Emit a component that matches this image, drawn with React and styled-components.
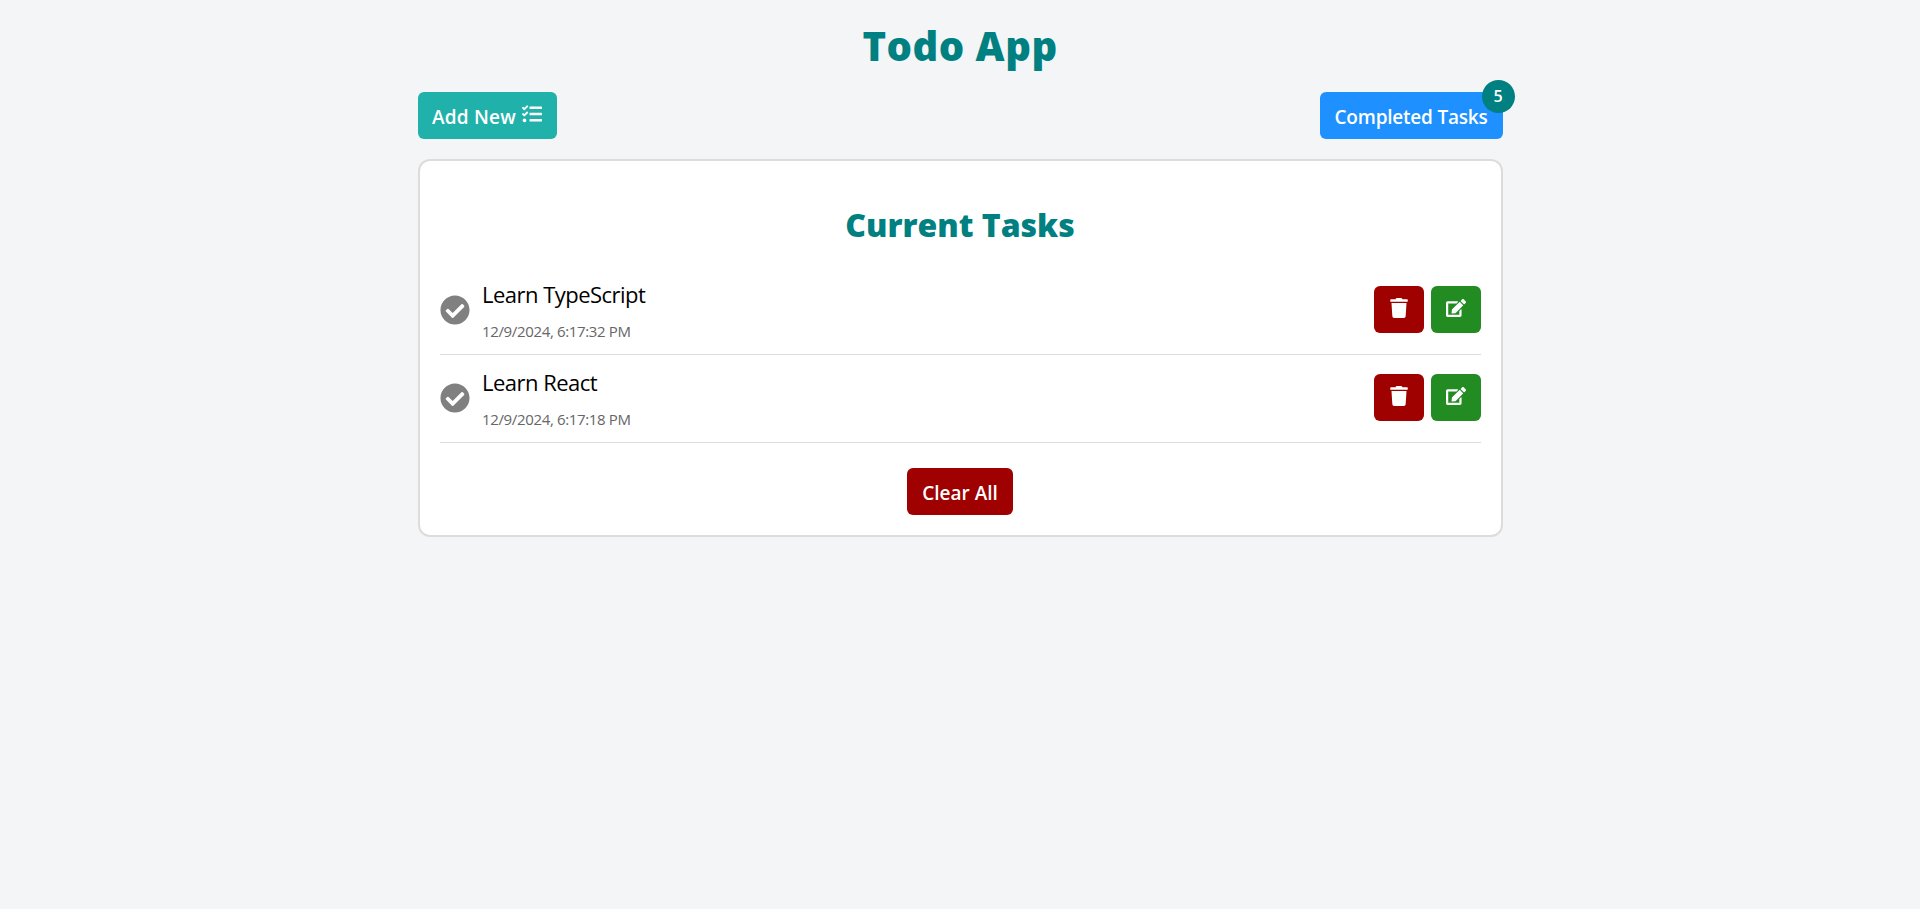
import React from "react";
import styled, { createGlobalStyle } from "styled-components";
import { FaTasks, FaTrash, FaEdit, FaCheckCircle } from "react-icons/fa";

const GlobalStyle = createGlobalStyle`
  *, *::before, *::after { box-sizing: border-box; }
  body {
    margin: 0;
    background: #f3f5f7;
    font-family: "Segoe UI", "Open Sans", "Noto Sans", sans-serif;
    color: #000;
  }
`;

const Container = styled.main`
  display: flex;
  flex-direction: column;
  width: 1085px;
  margin: 0 auto;
  padding-top: 19px;
`;

const Title = styled.h1`
  margin: 0 0 19px;
  height: 54px;
  line-height: 54px;
  font-size: 40px;
  font-weight: 800;
  letter-spacing: 0.5px;
  text-align: center;
  color: teal;
`;

const Toolbar = styled.div`
  display: flex;
  justify-content: space-between;
  margin-bottom: 20px;
`;

const Button = styled.button`
  position: relative;
  display: flex;
  align-items: center;
  justify-content: center;
  gap: 6px;
  width: ${({ $width }) => $width}px;
  height: 47px;
  padding: 0;
  border: 0;
  border-radius: 6px;
  background: ${({ $color }) => $color};
  color: #fff;
  font: inherit;
  font-size: 19px;
  font-weight: 600;
  letter-spacing: ${({ $spacing }) => $spacing || 0}px;
  white-space: nowrap;
  cursor: pointer;

  svg {
    flex: none;
    font-size: 20px;
    margin-bottom: 3px;
  }
`;

const Label = styled.span`
  padding-top: 3px;
  line-height: 26px;
`;

const Badge = styled.span`
  position: absolute;
  top: -12px;
  right: -12px;
  display: flex;
  align-items: center;
  justify-content: center;
  width: 33px;
  height: 33px;
  border-radius: 50%;
  background: teal;
  font-size: 16px;
  line-height: 33px;
  letter-spacing: 0;
`;

const Card = styled.section`
  display: flex;
  flex-direction: column;
  align-items: center;
  height: 378px;
  padding: 42px 20px 20px;
  border: 2px solid #dcdcdc;
  border-radius: 12px;
  background: #fff;
`;

const Heading = styled.h2`
  margin: 0 0 20px;
  height: 44px;
  line-height: 44px;
  font-size: 32px;
  font-weight: 800;
  color: teal;
`;

const TaskList = styled.ul`
  width: 100%;
  margin: 0 0 25px;
  padding: 0;
  list-style: none;
`;

const TaskRow = styled.li`
  display: flex;
  align-items: center;
  height: 88px;
  padding-bottom: 1px;
  border-bottom: 1px solid #dcdcdc;
`;

const Check = styled(FaCheckCircle)`
  flex: none;
  font-size: 30px;
  color: gray;
`;

const TaskText = styled.div`
  display: flex;
  flex-direction: column;
  flex: 1;
  margin-left: 12.5px;
`;

const TaskName = styled.span`
  line-height: 30px;
  font-size: 22px;
  letter-spacing: -0.52px;
`;

const TaskDate = styled.time`
  margin-top: 11px;
  line-height: 22px;
  font-size: 15px;
  letter-spacing: -0.35px;
  color: #666;
`;

const Actions = styled.div`
  display: flex;
  gap: 7px;
  padding-bottom: 1px;
`;

const tasks = [
  { name: "Learn TypeScript", date: "12/9/2024, 6:17:32 PM" },
  { name: "Learn React", date: "12/9/2024, 6:17:18 PM" },
];

export default function App() {
  return (
    <>
      <GlobalStyle />
      <Container>
        <Title>Todo App</Title>
        <Toolbar>
          <Button $color="lightseagreen" $width={139} $spacing={0.2}>
            <Label>Add New</Label>
            <FaTasks />
          </Button>
          <Button $color="dodgerblue" $width={183} $spacing={-0.22}>
            <Label>Completed Tasks</Label>
            <Badge>5</Badge>
          </Button>
        </Toolbar>
        <Card>
          <Heading>Current Tasks</Heading>
          <TaskList>
            {tasks.map(({ name, date }) => (
              <TaskRow key={name}>
                <Check />
                <TaskText>
                  <TaskName>{name}</TaskName>
                  <TaskDate>{date}</TaskDate>
                </TaskText>
                <Actions>
                  <Button $color="#9f0000" $width={50} aria-label="Delete">
                    <FaTrash />
                  </Button>
                  <Button $color="forestgreen" $width={50} aria-label="Edit">
                    <FaEdit />
                  </Button>
                </Actions>
              </TaskRow>
            ))}
          </TaskList>
          <Button $color="#9f0000" $width={106}>
            <Label>Clear All</Label>
          </Button>
        </Card>
      </Container>
    </>
  );
}
